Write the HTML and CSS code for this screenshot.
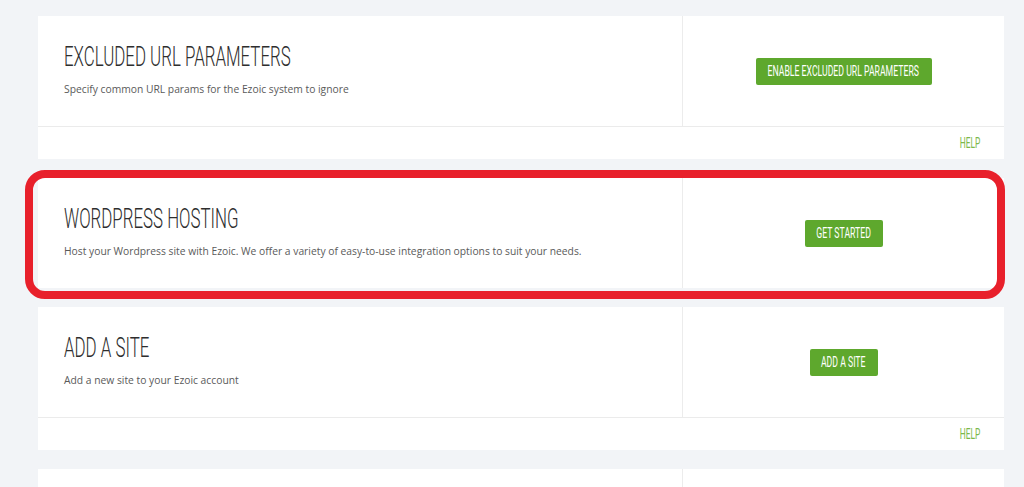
FILE: index.html
```html
<!DOCTYPE html>
<html>
<head>
<meta charset="utf-8">
<link rel="stylesheet" href="styles.css">
</head>
<body>
<div class="page">
  <section class="card">
    <div class="card-main">
      <div class="info">
        <h2 class="title"><span class="cond">EXCLUDED URL PARAMETERS</span></h2>
        <p class="desc">Specify common URL params for the Ezoic system to ignore</p>
      </div>
      <div class="action"><a class="btn btn-wide"><span class="cond">ENABLE EXCLUDED URL PARAMETERS</span></a></div>
    </div>
    <div class="card-foot"><a class="help"><span class="cond">HELP</span></a></div>
  </section>

  <section class="card highlighted">
    <div class="card-main">
      <div class="info">
        <h2 class="title"><span class="cond">WORDPRESS HOSTING</span></h2>
        <p class="desc">Host your Wordpress site with Ezoic. We offer a variety of easy-to-use integration options to suit your needs.</p>
      </div>
      <div class="action"><a class="btn btn-mid"><span class="cond">GET STARTED</span></a></div>
    </div>
    <div class="mark"></div>
  </section>

  <section class="card">
    <div class="card-main">
      <div class="info">
        <h2 class="title"><span class="cond">ADD A SITE</span></h2>
        <p class="desc">Add a new site to your Ezoic account</p>
      </div>
      <div class="action"><a class="btn btn-small"><span class="cond">ADD A SITE</span></a></div>
    </div>
    <div class="card-foot"><a class="help"><span class="cond">HELP</span></a></div>
  </section>

  <section class="card">
    <div class="card-main">
      <div class="info"></div>
      <div class="action"></div>
    </div>
  </section>
</div>
</body>
</html>
```
FILE: styles.css
```css
html, body {
  margin: 0;
  padding: 0;
  background: #f2f4f7;
  height: 487px;
  overflow: hidden;
}
.page {
  display: flex;
  flex-direction: column;
  gap: 19px;
  padding: 16px 20px 0 38px;
}
.card {
  background: #fff;
  position: relative;
}
.card-main {
  display: grid;
  grid-template-columns: 644px 1fr;
  height: 110px;
}
.info {
  padding: 27px 0 0 26px;
}
.cond {
  display: inline-block;
  white-space: nowrap;
}
.title {
  margin: 0;
  font-family: Roboto, "DejaVu Sans", sans-serif;
  font-weight: 300;
  font-size: 27px;
  line-height: 28px;
  color: #2e2e2e;
  height: 28px;
}
.title .cond {
  transform: scaleX(0.625);
  transform-origin: 0 50%;
}
.desc {
  margin: 11px 0 0;
  font-family: "Open Sans", sans-serif;
  font-size: 10.3px;
  line-height: 15px;
  color: #5a5a5a;
}
.action {
  border-left: 1px solid #ececec;
  display: flex;
  align-items: center;
  justify-content: center;
}
.btn {
  display: flex;
  align-items: center;
  justify-content: center;
  height: 27px;
  background: #5ea82d;
  border-radius: 2px;
  color: #fff;
  font-family: Roboto, "DejaVu Sans", sans-serif;
  font-size: 14.5px;
  overflow: hidden;
}
.btn .cond {
  transform: scaleX(0.6);
  transform-origin: 50% 50%;
}
.btn-wide { width: 176px; }
.btn-mid { width: 78px; }
.btn-small { width: 68px; }
.card-foot {
  border-top: 1px solid #ebebeb;
  height: 32px;
  display: flex;
  align-items: center;
  justify-content: flex-end;
  padding-right: 24px;
}
.help {
  font-family: Roboto, "DejaVu Sans", sans-serif;
  font-size: 14px;
  color: #7cb84a;
}
.help .cond {
  transform: scaleX(0.6);
  transform-origin: 100% 50%;
}
.mark {
  position: absolute;
  left: -13px;
  top: -8px;
  width: 980px;
  height: 129px;
  box-sizing: border-box;
  border: 8px solid #e8202b;
  border-radius: 20px;
  pointer-events: none;
}
```
